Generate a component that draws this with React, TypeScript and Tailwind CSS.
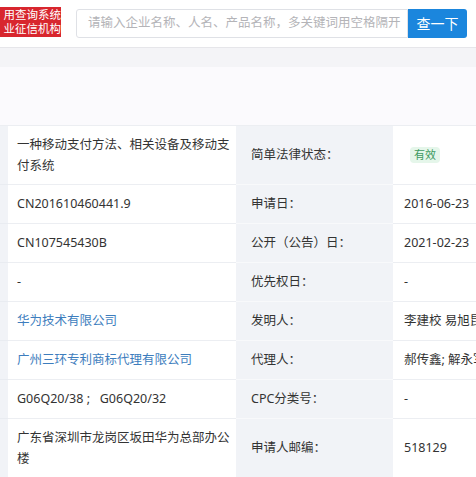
import React from 'react';

type Row = {
  value: React.ReactNode;
  label: string;
  right: React.ReactNode;
  link?: boolean;
  tall?: boolean;
};

const rows: Row[] = [
  { value: '一种移动支付方法、相关设备及移动支付系统', label: '简单法律状态：', right: <span className="ml-[6px] inline-block rounded-sm bg-[#e5f6ea] px-[4px] text-[11px] leading-[16px] text-[#3c9a5f]">有效</span>, tall: true },
  { value: 'CN201610460441.9', label: '申请日：', right: '2016-06-23' },
  { value: 'CN107545430B', label: '公开（公告）日：', right: '2021-02-23' },
  { value: '-', label: '优先权日：', right: '-' },
  { value: '华为技术有限公司', label: '发明人：', right: '李建校 易旭昆 张晓军', link: true },
  { value: '广州三环专利商标代理有限公司', label: '代理人：', right: '郝传鑫; 解永军', link: true },
  { value: 'G06Q20/38 ;\u00a0\u00a0\u00a0G06Q20/32', label: 'CPC分类号：', right: '-' },
  { value: '广东省深圳市龙岗区坂田华为总部办公楼', label: '申请人邮编：', right: '518129', tall: true },
];

export default function App() {
  return (
    <div
      className="h-[477px] w-[476px] overflow-hidden bg-white text-[12.5px] text-[#333]"
      style={{ fontFamily: '"Noto Sans", "Noto Sans CJK SC", sans-serif' }}
    >
      {/* Search header */}
      <header className="flex h-[48px] items-start border-b border-[#e6e6ea] bg-white">
        <div className="mt-[7px] flex h-[30px] w-[61px] flex-col items-end justify-center overflow-hidden bg-[#d8262e] text-[11.5px] leading-[14px] text-white">
          <span className="whitespace-nowrap">用查询系统</span>
          <span className="whitespace-nowrap">业征信机构</span>
        </div>
        <div className="ml-[15px] mt-[9px] flex h-[29px] w-[332px] items-center overflow-hidden whitespace-nowrap rounded-l-[3px] border border-[#dfe1e6] pl-[11px] text-[12.5px] text-[#b4b4b8]">
          请输入企业名称、人名、产品名称，多关键词用空格隔开
        </div>
        <button className="mt-[9px] flex h-[29px] w-[59px] items-center justify-center rounded-r-[3px] bg-[#1b86dd] text-[14px] text-white">
          查一下
        </button>
      </header>

      {/* Spacer band */}
      <div className="h-[19px] bg-[#f4f4f7]" />
      <div className="h-[59px] border-b border-[#eceef2] bg-[#fbfafd]" />

      {/* Detail table */}
      <div className="grid grid-cols-[8px_228px_157px_83px]">
        {rows.map((r, i) => (
          <React.Fragment key={i}>
            <div className="border-b border-[#e9ecf1] bg-[#f1f3f7]" />
            <div
              className={`border-b border-[#eceef2] bg-white py-[8px] pl-[9px] pr-0 leading-[21px] ${r.tall ? 'min-h-[59px]' : 'h-[39px]'} ${r.link ? 'text-[#3d7dbd]' : ''}`}
            >
              {r.value}
            </div>
            <div className="flex items-center whitespace-nowrap border-b border-[#f8f9fb] bg-[#f1f3f7] pl-[15px]">
              {r.label}
            </div>
            <div className="flex min-w-0 items-center overflow-hidden whitespace-nowrap border-b border-[#eceef2] bg-white pl-[11px]">
              {r.right}
            </div>
          </React.Fragment>
        ))}
      </div>
    </div>
  );
}
